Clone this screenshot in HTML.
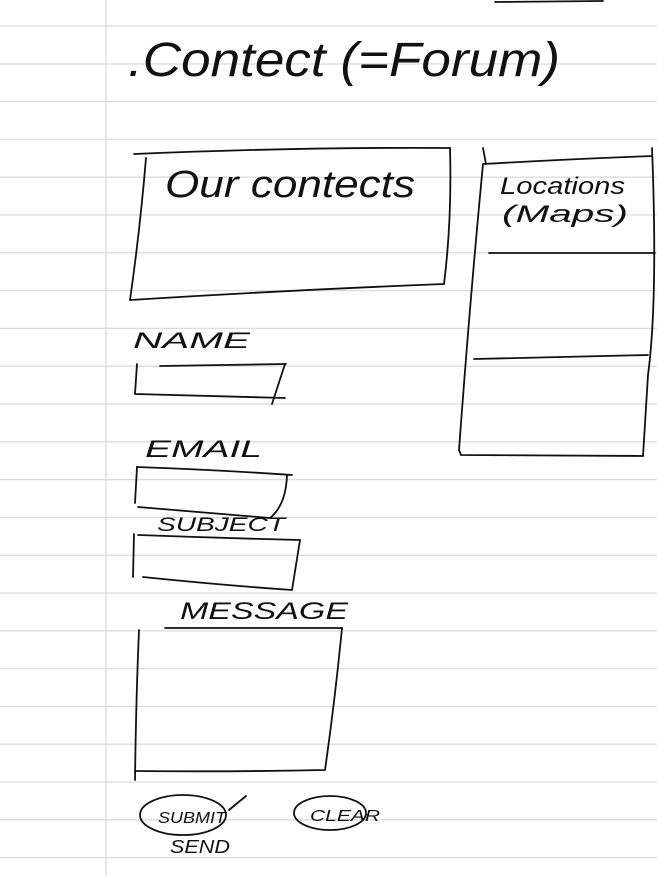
<!DOCTYPE html>
<html><head><meta charset="utf-8"><style>
html,body{margin:0;padding:0;background:#fff;width:657px;height:876px;overflow:hidden}
svg{display:block}
text{font-family:"Liberation Sans",sans-serif;fill:#111;font-style:italic}
</style></head><body>
<svg width="657" height="876" viewBox="0 0 657 876" xmlns="http://www.w3.org/2000/svg">
<g stroke="#dcdcdc" stroke-width="1.3">
<line x1="0" y1="26" x2="657" y2="26"/><line x1="0" y1="64" x2="657" y2="64"/><line x1="0" y1="101.6" x2="657" y2="101.6"/><line x1="0" y1="139.4" x2="657" y2="139.4"/><line x1="0" y1="177.2" x2="657" y2="177.2"/><line x1="0" y1="215" x2="657" y2="215"/><line x1="0" y1="252.8" x2="657" y2="252.8"/><line x1="0" y1="290.6" x2="657" y2="290.6"/><line x1="0" y1="328.4" x2="657" y2="328.4"/><line x1="0" y1="366.2" x2="657" y2="366.2"/><line x1="0" y1="404" x2="657" y2="404"/><line x1="0" y1="441.8" x2="657" y2="441.8"/><line x1="0" y1="479.6" x2="657" y2="479.6"/><line x1="0" y1="517.4" x2="657" y2="517.4"/><line x1="0" y1="555.2" x2="657" y2="555.2"/><line x1="0" y1="593" x2="657" y2="593"/><line x1="0" y1="630.8" x2="657" y2="630.8"/><line x1="0" y1="668.6" x2="657" y2="668.6"/><line x1="0" y1="706.4" x2="657" y2="706.4"/><line x1="0" y1="744.2" x2="657" y2="744.2"/><line x1="0" y1="782" x2="657" y2="782"/><line x1="0" y1="819.8" x2="657" y2="819.8"/><line x1="0" y1="857.6" x2="657" y2="857.6"/>
<line x1="106" y1="0" x2="106" y2="876"/>
</g>
<g fill="none" stroke="#111" stroke-width="1.8" stroke-linecap="round" stroke-linejoin="round">
<path d="M495 2 L603 1"/>
<path d="M134 154 Q300 147 450 148"/><path d="M146 158 Q140 230 130 300"/><path d="M450 148 Q452 220 444 284"/><path d="M130 300 Q290 290 444 284"/>
<path d="M483 148 L486 164"/><path d="M483 164 Q570 159 652 156"/><path d="M483 164 Q470 300 459 450 L461 455 L643 456"/><path d="M652 148 Q658 300 648 375 L643 456"/>
<path d="M489 253 L655 253"/><path d="M474 359 L648 355"/>
<path d="M160 366 L286 364"/><path d="M137 364 L135 394 L285 398"/><path d="M285 364 L272 404"/>
<path d="M137 467 Q220 470 292 475"/><path d="M137 467 L135 503"/><path d="M138 507 Q200 512 270 518 Q286 505 287 475"/>
<path d="M138 535 Q220 538 300 540"/><path d="M134 534 L133 577"/><path d="M143 577 Q220 585 292 590 L300 540"/>
<path d="M165 628 L342 628"/><path d="M139 630 Q136 700 135 780"/><path d="M135 771 Q230 772 325 770 Q335 700 342 628"/>
<ellipse cx="183" cy="815" rx="43" ry="20"/><path d="M229 810 L246 796"/>
<ellipse cx="330" cy="813" rx="36" ry="17"/>
</g>
<text x="128" y="76" font-size="48" textLength="432" lengthAdjust="spacingAndGlyphs">.Contect (=Forum)</text>
<text x="165" y="197" font-size="38" textLength="250" lengthAdjust="spacingAndGlyphs">Our contects</text>
<text x="500" y="194" font-size="24" textLength="125" lengthAdjust="spacingAndGlyphs">Locations</text>
<text x="502" y="222" font-size="24" textLength="126" lengthAdjust="spacingAndGlyphs">(Maps)</text>
<text x="133" y="348" font-size="22" textLength="117" lengthAdjust="spacingAndGlyphs">NAME</text>
<text x="145" y="457" font-size="24" textLength="117" lengthAdjust="spacingAndGlyphs">EMAIL</text>
<text x="157" y="531" font-size="19" textLength="128" lengthAdjust="spacingAndGlyphs">SUBJECT</text>
<text x="180" y="619" font-size="24" textLength="168" lengthAdjust="spacingAndGlyphs">MESSAGE</text>
<text x="158" y="823" font-size="16" textLength="68" lengthAdjust="spacingAndGlyphs">SUBMIT</text>
<text x="170" y="853" font-size="18" textLength="60" lengthAdjust="spacingAndGlyphs">SEND</text>
<text x="310" y="821" font-size="16" textLength="70" lengthAdjust="spacingAndGlyphs">CLEAR</text>
</svg>
</body></html>
